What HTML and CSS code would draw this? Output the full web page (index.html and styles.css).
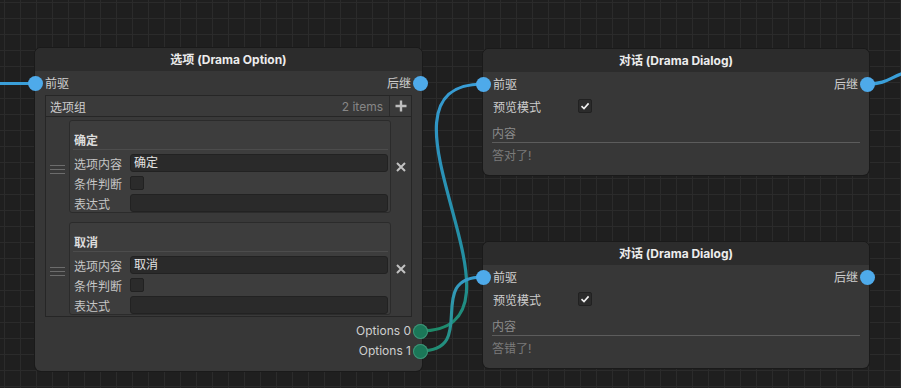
FILE: index.html
```html
<!DOCTYPE html>
<html lang="zh">
<head>
<meta charset="utf-8">
<title>Drama Graph</title>
<link rel="stylesheet" href="styles.css">
</head>
<body>
<div class="canvas">
  <svg class="edges" width="901" height="388" viewBox="0 0 901 388">
    <defs>
      <linearGradient id="g0" gradientUnits="userSpaceOnUse" x1="420" y1="331" x2="483" y2="84">
        <stop offset="0" stop-color="#1d8a66"/>
        <stop offset="0.3" stop-color="#238fa0"/>
        <stop offset="0.75" stop-color="#2d93bf"/>
        <stop offset="1" stop-color="#3a9fd9"/>
      </linearGradient>
      <linearGradient id="g1" gradientUnits="userSpaceOnUse" x1="420" y1="351" x2="483" y2="277">
        <stop offset="0" stop-color="#1d8a66"/>
        <stop offset="1" stop-color="#3a9fd9"/>
      </linearGradient>
    </defs>
    <path class="edge blue" d="M0,83.5 L36,83.5"/>
    <path class="edge" stroke="url(#g0)" d="M420,331 C550,331 353,84 483,84"/>
    <path class="edge" stroke="url(#g1)" d="M420,351 C480,351 423,277 483,277"/>
    <path class="edge blue" d="M868,84 C885,84 890,78 901,74"/>
  </svg>

  <div class="node node-option">
    <div class="node-title">选项 (Drama Option)</div>
    <div class="port-row">
      <div class="port in"><span class="dot blue"></span><span class="port-label">前驱</span></div>
      <div class="port out"><span class="port-label">后继</span><span class="dot blue"></span></div>
    </div>
    <div class="list">
      <div class="list-header">
        <span class="list-title">选项组</span>
        <span class="list-count">2 items</span>
        <span class="list-add">
          <svg width="12" height="12" viewBox="0 0 12 12"><path d="M6 0.5V11.5M0.5 6H11.5" stroke="#bdbdbd" stroke-width="2.4"/></svg>
        </span>
      </div>
      <div class="list-body">
        <div class="item">
          <div class="handle"><span></span><span></span><span></span></div>
          <div class="item-box">
            <div class="item-title">确定</div>
            <div class="field"><span class="field-label">选项内容</span><div class="input">确定</div></div>
            <div class="field"><span class="field-label">条件判断</span><span class="check"></span></div>
            <div class="field"><span class="field-label">表达式</span><div class="input"></div></div>
          </div>
          <div class="remove">
            <svg width="10" height="10" viewBox="0 0 10 10"><path d="M1 1L9 9M9 1L1 9" stroke="#c2c2c2" stroke-width="2"/></svg>
          </div>
        </div>
        <div class="item">
          <div class="handle"><span></span><span></span><span></span></div>
          <div class="item-box">
            <div class="item-title">取消</div>
            <div class="field"><span class="field-label">选项内容</span><div class="input">取消</div></div>
            <div class="field"><span class="field-label">条件判断</span><span class="check"></span></div>
            <div class="field"><span class="field-label">表达式</span><div class="input"></div></div>
          </div>
          <div class="remove">
            <svg width="10" height="10" viewBox="0 0 10 10"><path d="M1 1L9 9M9 1L1 9" stroke="#c2c2c2" stroke-width="2"/></svg>
          </div>
        </div>
      </div>
    </div>
    <div class="outputs">
      <div class="port out"><span class="port-label">Options 0</span><span class="dot green"></span></div>
      <div class="port out"><span class="port-label">Options 1</span><span class="dot green"></span></div>
    </div>
  </div>

  <div class="node node-dialog dialog-a">
    <div class="node-title">对话 (Drama Dialog)</div>
    <div class="port-row">
      <div class="port in"><span class="dot blue"></span><span class="port-label">前驱</span></div>
      <div class="port out"><span class="port-label">后继</span><span class="dot blue"></span></div>
    </div>
    <div class="pref-row"><span class="pref-label">预览模式</span><span class="check checked"><svg width="10" height="10" viewBox="0 0 10 10"><path d="M1.5 5.2L4 7.6L8.6 2.4" fill="none" stroke="#f0f0f0" stroke-width="1.6"/></svg></span></div>
    <div class="content-label">内容</div>
    <div class="content-text">答对了!</div>
  </div>

  <div class="node node-dialog dialog-b">
    <div class="node-title">对话 (Drama Dialog)</div>
    <div class="port-row">
      <div class="port in"><span class="dot blue"></span><span class="port-label">前驱</span></div>
      <div class="port out"><span class="port-label">后继</span><span class="dot blue"></span></div>
    </div>
    <div class="pref-row"><span class="pref-label">预览模式</span><span class="check checked"><svg width="10" height="10" viewBox="0 0 10 10"><path d="M1.5 5.2L4 7.6L8.6 2.4" fill="none" stroke="#f0f0f0" stroke-width="1.6"/></svg></span></div>
    <div class="content-label">内容</div>
    <div class="content-text">答错了!</div>
  </div>
</div>
</body>
</html>
```

FILE: styles.css
```css
* { box-sizing: border-box; }
html, body { margin: 0; padding: 0; }
body {
  width: 901px;
  height: 388px;
  overflow: hidden;
  background: #202020;
  font-family: Inter, "Noto Sans CJK SC", sans-serif;
  font-size: 12px;
  color: #c9c9c9;
}
.canvas {
  position: relative;
  width: 901px;
  height: 388px;
  overflow: hidden;
  background-color: #1f1f1f;
  background-image:
    linear-gradient(to right, #2b2b2b 1px, transparent 1px),
    linear-gradient(to bottom, #2b2b2b 1px, transparent 1px);
  background-size: 16px 16px;
  background-position: 4px 2px;
}
.edges { position: absolute; left: 0; top: 0; }
.edge { fill: none; stroke-width: 3.2; stroke-linecap: round; }
.edge.blue { stroke: #3a9fd9; }

.node {
  position: absolute;
  display: flex;
  flex-direction: column;
  background: #373737;
  border-radius: 6px;
  box-shadow: 0 0 0 1px #1a1a1a;
}
.node-option { left: 35px; top: 48px; width: 387px; height: 323px; }
.node-dialog { width: 386px; height: 126px; }
.dialog-a { left: 483px; top: 49px; }
.dialog-b { left: 483px; top: 242px; }

.node-title {
  height: 23px;
  line-height: 24px;
  text-align: center;
  font-weight: 700;
  color: #ececec;
  background: #2c2c2c;
  border-radius: 6px 6px 0 0;
}
.port-row {
  height: 24px;
  display: flex;
  justify-content: space-between;
  align-items: center;
  padding-top: 1px;
}
.port { display: flex; align-items: center; }
.port-label { line-height: 16px; color: #cfcfcf; }
.dot {
  width: 15px;
  height: 15px;
  border-radius: 50%;
  flex: none;
}
.dot.blue { background: #4eaaea; }
.dot.green { background: #1b7758; box-shadow: inset 0 0 0 1px #3f9277; }
.port.in .dot { margin-left: -7px; margin-right: 2px; }
.port.out .dot { margin-right: -6px; margin-left: 2px; }

.list { margin: 0 10px; }
.list-header {
  height: 22px;
  display: flex;
  align-items: center;
  background: #3a3a3a;
  border: 1px solid #262626;
}
.list-title { padding-left: 4px; color: #cdcdcd; }
.list-count { margin-left: auto; padding-right: 6px; color: #878787; }
.list-add {
  width: 22px;
  height: 100%;
  border-left: 1px solid #2a2a2a;
  display: flex;
  align-items: center;
  justify-content: center;
}
.list-body {
  border: 1px solid #262626;
  border-top: none;
  background: #393939;
  padding: 3px 0 1px;
  display: flex;
  flex-direction: column;
  gap: 9px;
}
.item { display: flex; align-items: center; }
.handle {
  width: 23px;
  flex: none;
  display: flex;
  flex-direction: column;
  align-items: center;
  gap: 3px;
  padding-top: 5px;
}
.handle span { display: block; width: 15px; height: 1px; background: #6c6c6c; }
.item-box {
  flex: 1;
  height: 93px;
  background: #3d3d3d;
  border: 1px solid #2b2b2b;
  border-radius: 3px;
  padding: 0 2px 0 3px;
}
.item-title {
  padding: 11px 0 0 1px;
  line-height: 17px;
  font-weight: 700;
  color: #dcdcdc;
  border-bottom: 1px solid #4c4c4c;
  margin-bottom: 3px;
}
.field { height: 20px; display: flex; align-items: center; }
.field-label { width: 57px; flex: none; padding-left: 1px; color: #c6c6c6; }
.input {
  flex: 1;
  height: 18px;
  line-height: 16px;
  padding-left: 3px;
  background: #2a2a2a;
  border: 1px solid #222222;
  border-radius: 3px;
  color: #e2e2e2;
}
.check {
  width: 14px;
  height: 14px;
  background: #2b2b2b;
  border: 1px solid #212121;
  border-radius: 2px;
  display: flex;
  align-items: center;
  justify-content: center;
}
.remove {
  width: 20px;
  flex: none;
  display: flex;
  justify-content: center;
  align-items: center;
}

.outputs {
  margin-top: 4px;
  display: flex;
  flex-direction: column;
  align-items: flex-end;
}
.outputs .port { height: 20px; }

.pref-row {
  height: 20px;
  display: flex;
  align-items: center;
  padding-left: 10px;
}
.pref-label { width: 85px; color: #cdcdcd; }
.content-label {
  margin: 10px 9px 0;
  line-height: 16px;
  color: #8a8a8a;
  border-bottom: 1px solid #5c5c5c;
}
.content-text {
  margin: 0 9px;
  padding-top: 5px;
  line-height: 16px;
  color: #7b7b7b;
}
```
